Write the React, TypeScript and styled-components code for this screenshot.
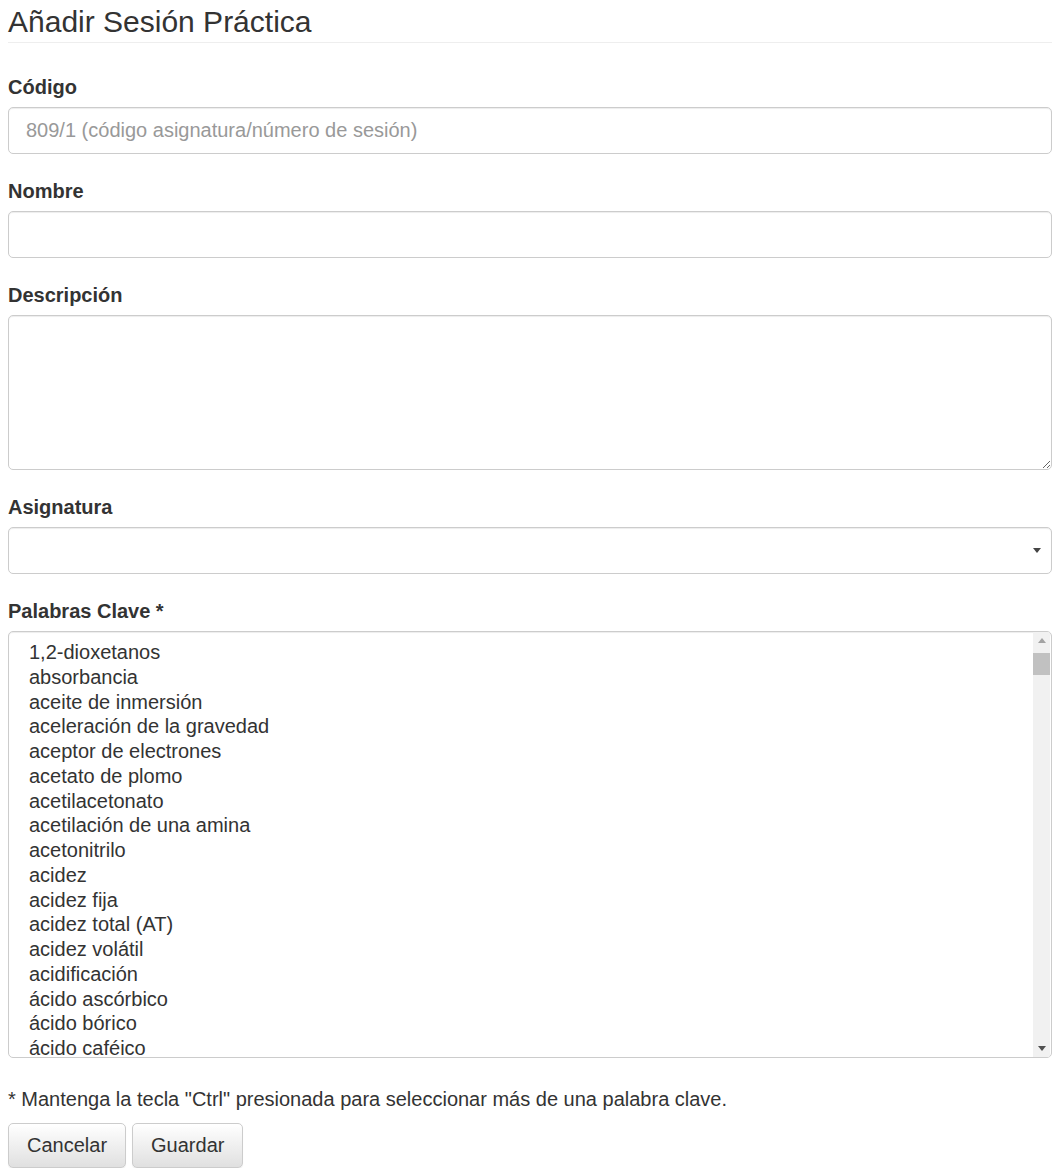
import React from "react";
import styled, { createGlobalStyle } from "styled-components";

const GlobalStyle = createGlobalStyle`
  html, body { margin: 0; padding: 0; background: #fff; }
  body {
    font-family: "Liberation Sans", Arial, Helvetica, sans-serif;
    font-size: 20px;
    color: #333;
  }
  * { box-sizing: border-box; }
`;

const Page = styled.div`
  width: 1044px;
  margin-left: 8px;
`;

const PageHeader = styled.h3`
  margin: 5px 0 30px 0;
  padding-bottom: 4px;
  font-size: 30px;
  line-height: 33px;
  font-weight: 500;
  color: #333;
  border-bottom: 1px solid #eee;
`;

const Form = styled.form`
  display: flex;
  flex-direction: column;
`;

const FormGroup = styled.div<{ $mb?: number }>`
  display: flex;
  flex-direction: column;
  margin-bottom: ${(p) => (p.$mb ?? 23)}px;
`;

const Label = styled.label`
  font-weight: 700;
  font-size: 20px;
  line-height: 28px;
  margin-bottom: 6px;
  color: #333;
`;

const controlBase = `
  width: 100%;
  border: 1px solid #ccc;
  border-radius: 5px;
  background: #fff;
  box-shadow: inset 0 1px 1px rgba(0, 0, 0, 0.075);
  font-family: "Liberation Sans", Arial, Helvetica, sans-serif;
  font-size: 20px;
  color: #555;
`;

const TextInput = styled.input`
  ${controlBase}
  height: 47px;
  padding: 0 17px;
  outline: none;
  &::placeholder { color: #999; opacity: 1; }
`;

const TextArea = styled.textarea`
  ${controlBase}
  height: 155px;
  padding: 9px 17px;
  resize: vertical;
  outline: none;
  display: block;
`;

const SelectBox = styled.div`
  ${controlBase}
  height: 47px;
  display: flex;
  align-items: center;
  justify-content: flex-end;
  padding-right: 10px;
`;

const ListBox = styled.div`
  ${controlBase}
  height: 427px;
  display: flex;
  overflow: hidden;
`;

const OptionList = styled.div`
  flex: 1;
  overflow: hidden;
  padding: 8px 0 0 20px;
`;

const Option = styled.div`
  height: 24.75px;
  line-height: 24.75px;
  font-size: 20px;
  color: #333;
  white-space: nowrap;
`;

const Scrollbar = styled.div`
  width: 17px;
  margin-right: 1px;
  background: #f1f1f1;
  display: flex;
  flex-direction: column;
  align-items: center;
`;

const ScrollArrow = styled.div`
  height: 17px;
  width: 17px;
  display: flex;
  align-items: center;
  justify-content: center;
`;

const Thumb = styled.div`
  width: 17px;
  height: 22px;
  background: #c1c1c1;
  margin-top: 4px;
`;

const Spacer = styled.div`
  flex: 1;
`;

const HelpText = styled.p`
  margin: 27px 0 10px 0;
  font-size: 20px;
  line-height: 28px;
  color: #333;
`;

const ButtonRow = styled.div`
  display: flex;
  gap: 6px;
`;

const Button = styled.button`
  height: 45px;
  padding: 0 18px;
  font-family: "Liberation Sans", Arial, Helvetica, sans-serif;
  font-size: 20px;
  color: #333;
  background: linear-gradient(to bottom, #fff 0%, #e0e0e0 100%);
  border: 1px solid #ccc;
  border-radius: 5px;
  box-shadow: inset 0 1px 0 rgba(255, 255, 255, 0.15), 0 1px 1px rgba(0, 0, 0, 0.075);
  cursor: pointer;
`;

const keywords = [
  "1,2-dioxetanos",
  "absorbancia",
  "aceite de inmersión",
  "aceleración de la gravedad",
  "aceptor de electrones",
  "acetato de plomo",
  "acetilacetonato",
  "acetilación de una amina",
  "acetonitrilo",
  "acidez",
  "acidez fija",
  "acidez total (AT)",
  "acidez volátil",
  "acidificación",
  "ácido ascórbico",
  "ácido bórico",
  "ácido caféico",
];

const Triangle = ({ color, up }: { color: string; up?: boolean }) => (
  <svg width="8" height="5" viewBox="0 0 8 5">
    {up ? (
      <polygon points="0,5 8,5 4,0" fill={color} />
    ) : (
      <polygon points="0,0 8,0 4,5" fill={color} />
    )}
  </svg>
);

export default function App() {
  return (
    <>
      <GlobalStyle />
      <Page>
        <PageHeader>Añadir Sesión Práctica</PageHeader>
        <Form onSubmit={(e) => e.preventDefault()}>
          <FormGroup>
            <Label>Código</Label>
            <TextInput placeholder="809/1 (código asignatura/número de sesión)" />
          </FormGroup>
          <FormGroup>
            <Label>Nombre</Label>
            <TextInput />
          </FormGroup>
          <FormGroup>
            <Label>Descripción</Label>
            <TextArea />
          </FormGroup>
          <FormGroup>
            <Label>Asignatura</Label>
            <SelectBox>
              <Triangle color="#444" />
            </SelectBox>
          </FormGroup>
          <FormGroup $mb={0}>
            <Label>Palabras Clave *</Label>
            <ListBox>
              <OptionList>
                {keywords.map((k) => (
                  <Option key={k}>{k}</Option>
                ))}
              </OptionList>
              <Scrollbar>
                <ScrollArrow>
                  <Triangle color="#a3a3a3" up />
                </ScrollArrow>
                <Thumb />
                <Spacer />
                <ScrollArrow>
                  <Triangle color="#505050" />
                </ScrollArrow>
              </Scrollbar>
            </ListBox>
          </FormGroup>
          <HelpText>
            * Mantenga la tecla "Ctrl" presionada para seleccionar más de una palabra clave.
          </HelpText>
          <ButtonRow>
            <Button type="button">Cancelar</Button>
            <Button type="button">Guardar</Button>
          </ButtonRow>
        </Form>
      </Page>
    </>
  );
}
